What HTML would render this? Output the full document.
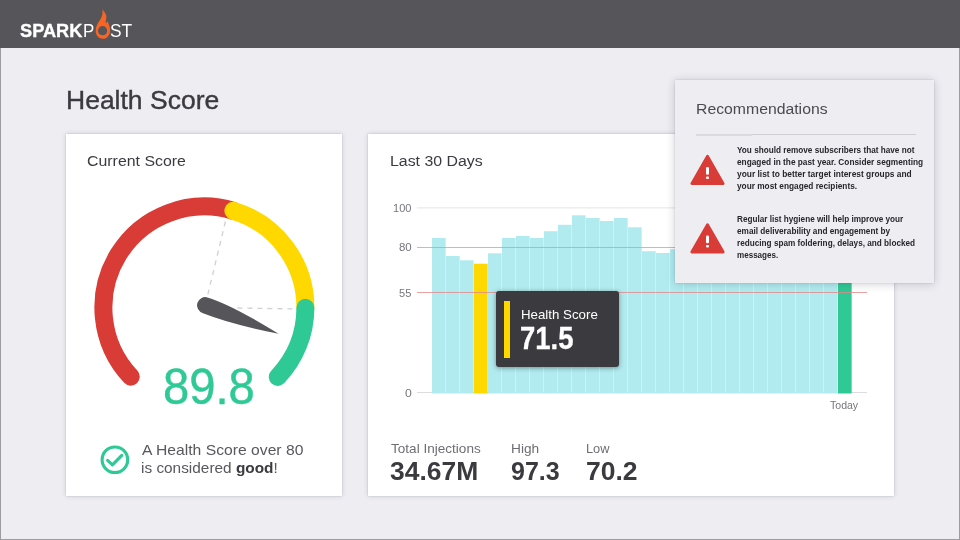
<!DOCTYPE html>
<html lang="en">
<head>
<meta charset="utf-8">
<title>Health Score</title>
<style>
*{box-sizing:border-box;margin:0;padding:0}
html,body{width:960px;height:540px;overflow:hidden}
body{background:#eeedf2;font-family:"Liberation Sans",Arial,sans-serif;color:#3b3a3f}
#app{position:absolute;left:0;top:0;width:960px;height:540px;overflow:hidden;will-change:transform}
.t{position:absolute;white-space:nowrap;line-height:1;transform-origin:0 0;font-weight:400}
.t b{font-weight:700;color:#3b3a3f}
#frame{position:absolute;left:0;top:48px;width:960px;height:492px;border:1px solid #9c9ca0;border-top:0;pointer-events:none;z-index:50}
header{position:absolute;left:0;top:0;width:960px;height:48px;background:#55555a}
.card{position:absolute;background:#fff;box-shadow:0 0 5px rgba(40,40,70,.16),0 0 1.5px rgba(40,40,70,.18)}
#c1{left:66px;top:134px;width:276px;height:362px}
#c2{left:368px;top:134px;width:526px;height:362px}
#rec{position:absolute;left:674.5px;top:80px;width:259.5px;height:203.2px;background:#eeedf2;box-shadow:0 1px 9px rgba(30,30,50,.2),0 0 2px rgba(30,30,50,.15);z-index:5}
#tip{position:absolute;left:496px;top:291px;width:123px;height:75.5px;background:#3b3a3f;border-radius:3px;box-shadow:0 1px 5px rgba(0,0,0,.4);z-index:4}
#tip i{position:absolute;left:8.3px;top:10px;width:6px;height:57px;background:#ffd800}
svg{position:absolute;left:0;top:0}
</style>
</head>
<body>
<div id="app">
<header>
<span class="t" style="left:20.18px;top:20.5px;font-size:19.0px;font-weight:700;color:#fff;transform:scale(0.9575,1);z-index:3;-webkit-text-stroke:0.35px #fff;">SPARK</span>
<span class="t" style="left:83.24px;top:20.5px;font-size:19.0px;font-weight:400;color:#fff;transform:scale(0.89,1);z-index:3;">P</span>
<span class="t" style="left:95px;top:21px;font-size:19.5px;color:#fa6423;opacity:0">O</span>
<span class="t" style="left:109.98px;top:20.5px;font-size:19.0px;font-weight:400;color:#fff;transform:scale(0.914,1);z-index:3;">ST</span>
</header>
<h1 class="t" style="left:66.12px;top:86.5px;font-size:26.6px;font-weight:400;color:#3b3a3f;transform:scale(0.9965,1);z-index:3;-webkit-text-stroke:0.4px #3b3a3f;">Health Score</h1>
<section class="card" id="c1"></section>
<section class="card" id="c2"></section>
<h2 class="t" style="left:86.5px;top:153.5px;font-size:14.9px;font-weight:400;color:#3b3a3f;transform:scale(1.0668,1);z-index:3;">Current Score</h2>
<h2 class="t" style="left:390.08px;top:153.5px;font-size:14.9px;font-weight:400;color:#3b3a3f;transform:scale(1.0664,1);z-index:3;">Last 30 Days</h2>

<svg width="960" height="540" viewBox="0 0 960 540" style="z-index:2">
<!-- gauge -->
<path d="M130.77 376.64 A101 101 0 0 1 233.42 210.76" stroke="#d93b36" stroke-width="18" fill="none" stroke-linecap="round"/>
<path d="M233.42 210.76 A101 101 0 0 1 305.40 307.85" stroke="#ffd800" stroke-width="18" fill="none" stroke-linecap="round"/>
<path d="M305.40 307.85 A101 101 0 0 1 277.78 376.90" stroke="#2fc995" stroke-width="18" fill="none" stroke-linecap="round"/>
<line x1="225.4" y1="221.5" x2="207.5" y2="296" stroke="#d0d0d5" stroke-width="1.3" stroke-dasharray="5 5"/>
<line x1="237.4" y1="308" x2="296" y2="309" stroke="#d0d0d5" stroke-width="1.3" stroke-dasharray="5 5"/>
<path d="M207.5 297.4 Q231.4 304.6 278.6 333.8 Q230.2 324 203.05 313.2 A8.2 8.2 0 1 1 207.5 297.4 Z" fill="#55555a"/>
<!-- chart -->
<rect x="417" y="207" width="450" height="1.6" fill="#efeff1"/>
<rect x="417" y="392" width="450" height="1" fill="#dcdcdf"/>
<rect x="432" y="238.0" width="13.65" height="155.5" fill="#b1ebef"/>
<rect x="446" y="256.0" width="13.65" height="137.5" fill="#b1ebef"/>
<rect x="460" y="260.3" width="13.65" height="133.2" fill="#b1ebef"/>
<rect x="474" y="263.7" width="13.65" height="129.8" fill="#ffd800"/>
<rect x="488" y="253.3" width="13.65" height="140.2" fill="#b1ebef"/>
<rect x="502" y="238.0" width="13.65" height="155.5" fill="#b1ebef"/>
<rect x="516" y="236.0" width="13.65" height="157.5" fill="#b1ebef"/>
<rect x="530" y="238.0" width="13.65" height="155.5" fill="#b1ebef"/>
<rect x="544" y="231.2" width="13.65" height="162.3" fill="#b1ebef"/>
<rect x="558" y="224.8" width="13.65" height="168.7" fill="#b1ebef"/>
<rect x="572" y="215.3" width="13.65" height="178.2" fill="#b1ebef"/>
<rect x="586" y="218.0" width="13.65" height="175.5" fill="#b1ebef"/>
<rect x="600" y="221.0" width="13.65" height="172.5" fill="#b1ebef"/>
<rect x="614" y="218.0" width="13.65" height="175.5" fill="#b1ebef"/>
<rect x="628" y="227.3" width="13.65" height="166.2" fill="#b1ebef"/>
<rect x="642" y="251.2" width="13.65" height="142.3" fill="#b1ebef"/>
<rect x="656" y="253.0" width="13.65" height="140.5" fill="#b1ebef"/>
<rect x="670" y="249.2" width="13.65" height="144.3" fill="#b1ebef"/>
<rect x="684" y="250.0" width="13.65" height="143.5" fill="#b1ebef"/>
<rect x="698" y="252.0" width="13.65" height="141.5" fill="#b1ebef"/>
<rect x="712" y="248.0" width="13.65" height="145.5" fill="#b1ebef"/>
<rect x="726" y="246.0" width="13.65" height="147.5" fill="#b1ebef"/>
<rect x="740" y="249.0" width="13.65" height="144.5" fill="#b1ebef"/>
<rect x="754" y="251.0" width="13.65" height="142.5" fill="#b1ebef"/>
<rect x="768" y="247.0" width="13.65" height="146.5" fill="#b1ebef"/>
<rect x="782" y="250.0" width="13.65" height="143.5" fill="#b1ebef"/>
<rect x="796" y="252.0" width="13.65" height="141.5" fill="#b1ebef"/>
<rect x="810" y="249.0" width="13.65" height="144.5" fill="#b1ebef"/>
<rect x="824" y="248.0" width="13.65" height="145.5" fill="#b1ebef"/>
<rect x="838" y="262.0" width="13.65" height="131.5" fill="#2fc995"/>
<rect x="417" y="247" width="450" height="1" fill="#5fd5b0" opacity=".8"/>
<rect x="417" y="292" width="450" height="1" fill="#e58a8a" opacity=".8"/>
<!-- check icon -->
<circle cx="114.9" cy="459.75" r="12.8" fill="none" stroke="#2fc995" stroke-width="3.1"/>
<path d="M107.6 460.3 L112.4 464.8 L121.8 455.4" fill="none" stroke="#2fc995" stroke-width="3.1" stroke-linecap="round" stroke-linejoin="round"/>
</svg>
<div class="t" style="left:393.28px;top:203.5px;font-size:10.0px;font-weight:400;color:#77777c;transform:scale(1.1029,1);z-index:3;">100</div>
<div class="t" style="left:398.62px;top:242.5px;font-size:10.0px;font-weight:400;color:#77777c;transform:scale(1.1459,1);z-index:3;">80</div>
<div class="t" style="left:399.42px;top:288.5px;font-size:10.0px;font-weight:400;color:#77777c;transform:scale(1.1034,1);z-index:3;">55</div>
<div class="t" style="left:405.25px;top:388.5px;font-size:10.0px;font-weight:400;color:#77777c;transform:scale(1.22,1);z-index:3;">0</div>
<div class="t" style="left:830.15px;top:400.5px;font-size:10.2px;font-weight:400;color:#77777c;transform:scale(1.0346,1);z-index:3;">Today</div>
<div class="t" style="left:163.12px;top:361.5px;font-size:49.2px;font-weight:400;color:#2fc995;transform:scale(0.9592,1);z-index:3;-webkit-text-stroke:0.45px #2fc995;">89.8</div>
<p class="t" style="left:142.2px;top:442.5px;font-size:14.6px;font-weight:400;color:#58585d;transform:scale(1.0756,1);z-index:3;">A Health Score over 80</p>
<p class="t" style="left:141.19px;top:460.5px;font-size:14.6px;font-weight:400;color:#58585d;transform:scale(1.0537,1);z-index:3;">is considered <b>good</b>!</p>
<div class="t" style="left:390.7px;top:442.5px;font-size:12.9px;font-weight:400;color:#6e6e73;transform:scale(1.052,1);z-index:3;">Total Injections</div>
<div class="t" style="left:510.95px;top:442.5px;font-size:12.9px;font-weight:400;color:#6e6e73;transform:scale(1.0617,1);z-index:3;">High</div>
<div class="t" style="left:585.69px;top:442.5px;font-size:12.9px;font-weight:400;color:#6e6e73;transform:scale(0.9922,1);z-index:3;">Low</div>
<div class="t" style="left:389.67px;top:458.5px;font-size:25.8px;font-weight:700;color:#3b3a3f;transform:scale(1.025,1);z-index:3;">34.67M</div>
<div class="t" style="left:510.5px;top:458.5px;font-size:25.8px;font-weight:700;color:#3b3a3f;transform:scale(0.969,1);z-index:3;">97.3</div>
<div class="t" style="left:585.99px;top:458.5px;font-size:25.8px;font-weight:700;color:#3b3a3f;transform:scale(1.027,1);z-index:3;">70.2</div>

<div id="tip"><i></i></div>
<div class="t" style="left:520.68px;top:307.5px;font-size:13.4px;font-weight:400;color:#fff;transform:scale(0.9919,1);z-index:4;">Health Score</div>
<div class="t" style="left:519.81px;top:322.5px;font-size:31.0px;font-weight:700;color:#fff;transform:scale(0.8857,1);z-index:4;-webkit-text-stroke:0.3px #fff;">71.5</div>

<aside id="rec"></aside>
<h3 class="t" style="left:696.34px;top:100.5px;font-size:15.5px;font-weight:400;color:#4a4a4f;transform:scale(1.0181,1);z-index:6;">Recommendations</h3>
<div style="position:absolute;left:696px;top:134px;width:220px;height:1px;background:#cdcdd2;z-index:6"></div>
<div style="position:absolute;left:695.5px;top:134px;width:56.5px;height:2px;background:#dadadf;z-index:6"></div>
<p class="t" style="left:737.2px;top:145.5px;font-size:8.5px;font-weight:700;color:#26262b;transform:scale(0.9638,1);z-index:6;">You should remove subscribers that have not</p>
<p class="t" style="left:737.2px;top:157.5px;font-size:8.5px;font-weight:700;color:#26262b;transform:scale(0.9753,1);z-index:6;">engaged in the past year. Consider segmenting</p>
<p class="t" style="left:737.2px;top:169.5px;font-size:8.5px;font-weight:700;color:#26262b;transform:scale(0.9866,1);z-index:6;">your list to better target interest groups and</p>
<p class="t" style="left:737.2px;top:181.5px;font-size:8.5px;font-weight:700;color:#26262b;transform:scale(0.9738,1);z-index:6;">your most engaged recipients.</p>
<p class="t" style="left:737.2px;top:214.5px;font-size:8.5px;font-weight:700;color:#26262b;transform:scale(0.9618,1);z-index:6;">Regular list hygiene will help improve your</p>
<p class="t" style="left:737.2px;top:226.5px;font-size:8.5px;font-weight:700;color:#26262b;transform:scale(0.9674,1);z-index:6;">email deliverability and engagement by</p>
<p class="t" style="left:737.2px;top:238.5px;font-size:8.5px;font-weight:700;color:#26262b;transform:scale(0.9643,1);z-index:6;">reducing spam foldering, delays, and blocked</p>
<p class="t" style="left:737.2px;top:250.5px;font-size:8.5px;font-weight:700;color:#26262b;transform:scale(0.9481,1);z-index:6;">messages.</p>
<svg width="960" height="540" viewBox="0 0 960 540" style="z-index:7">
<g id="warn1">
<path d="M707.5 156.2 L723.2 183.6 L691.8 183.6 Z" fill="#d93b36" stroke="#d93b36" stroke-width="2.8" stroke-linejoin="round"/>
<rect x="706" y="167" width="3" height="7.8" rx="1.2" fill="#fff"/>
<rect x="706" y="176.5" width="3" height="2.6" rx="1" fill="#fff"/>
</g>
<g id="warn2" transform="translate(0,68.4)">
<path d="M707.5 156.2 L723.2 183.6 L691.8 183.6 Z" fill="#d93b36" stroke="#d93b36" stroke-width="2.8" stroke-linejoin="round"/>
<rect x="706" y="167" width="3" height="7.8" rx="1.2" fill="#fff"/>
<rect x="706" y="176.5" width="3" height="2.6" rx="1" fill="#fff"/>
</g>
<!-- flame -->
<path d="M102.4 9.2 C103.6 11.2 106.6 13.8 106.4 17.6 C106.3 19.6 105.5 21.2 105.7 22.9 C106.7 22.7 107.3 21.9 107.6 21 C108.2 23.6 110.1 26.4 110.1 30.5 C110.1 35.1 107 38.8 102.9 38.8 C98.8 38.8 95.7 35.3 95.7 30.8 C95.7 26.6 97.5 24 99 21.6 C100.8 18.6 103.3 15.6 102.4 9.2 Z M102.6 26.1 A4.6 4.6 0 1 0 102.6 35.3 A4.6 4.6 0 1 0 102.6 26.1 Z" fill="#fa6423" fill-rule="evenodd"/>
</svg>
<div id="frame"></div>
</div>
</body>
</html>
